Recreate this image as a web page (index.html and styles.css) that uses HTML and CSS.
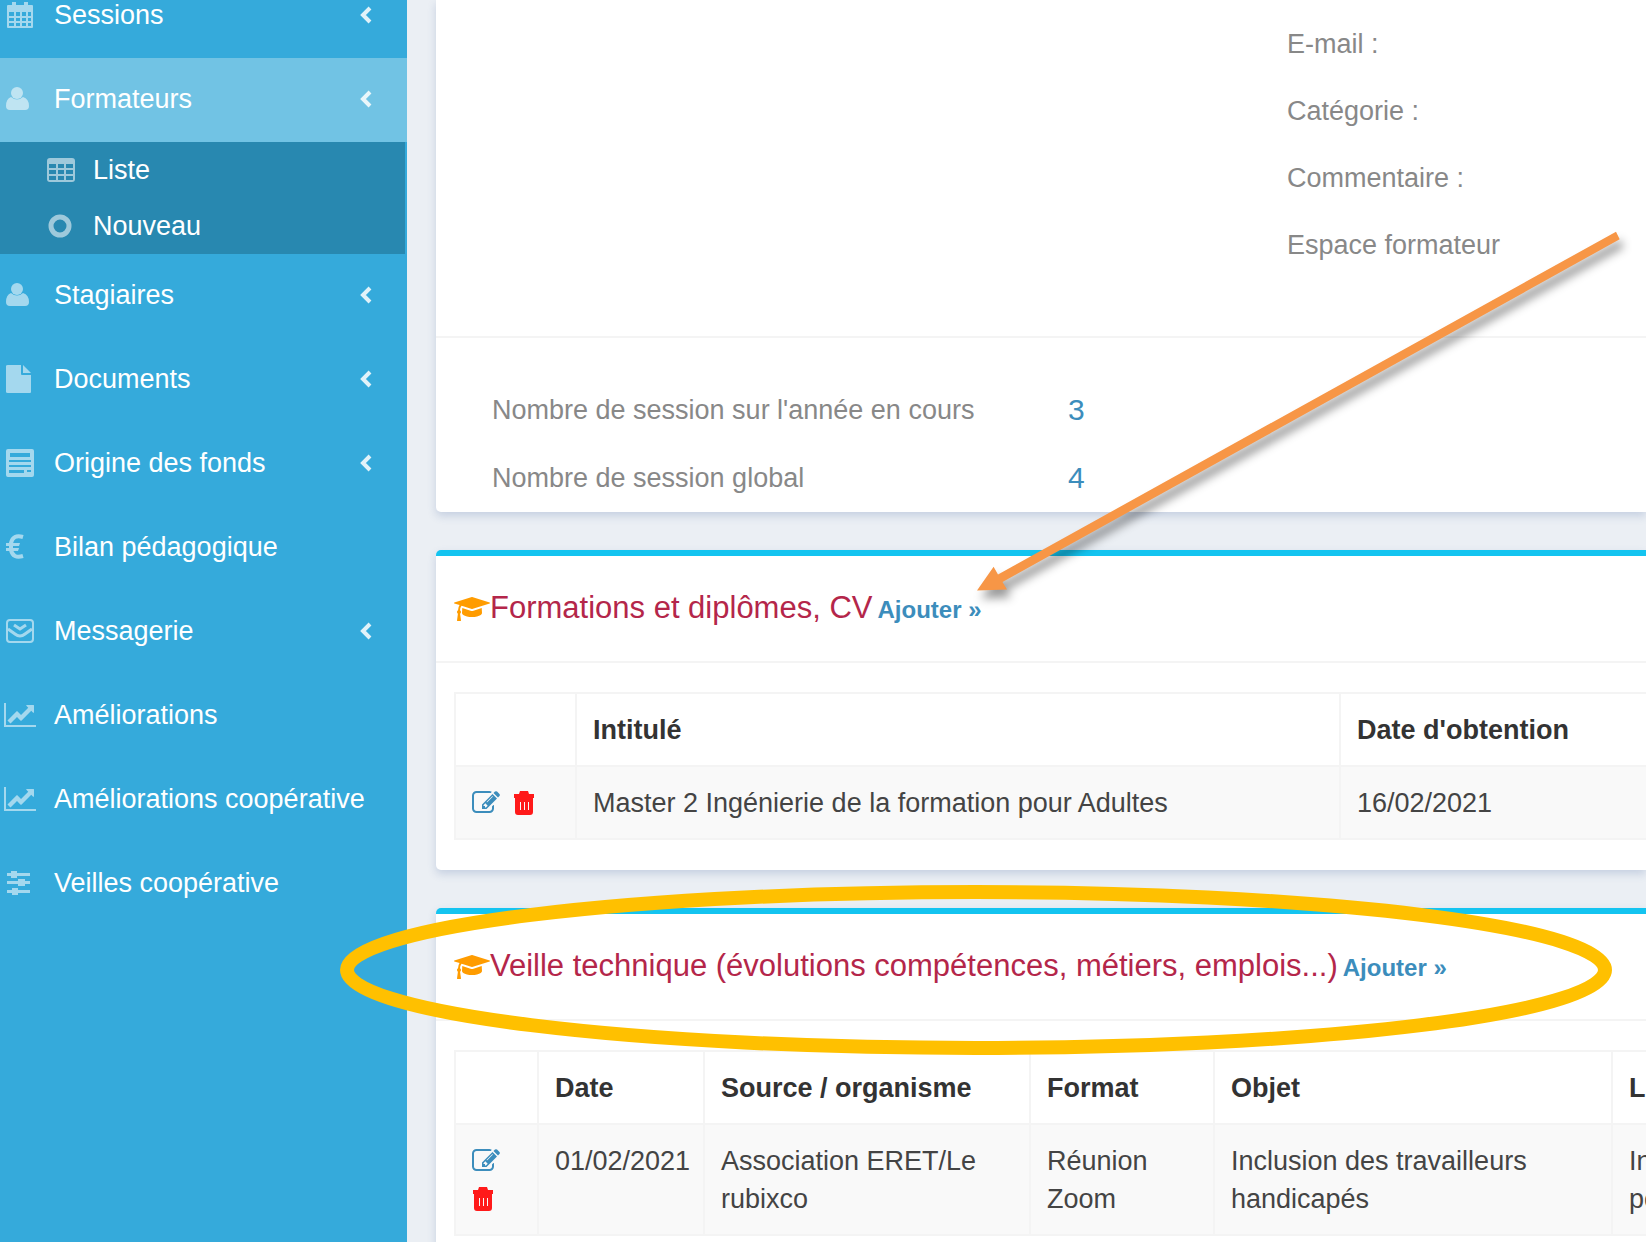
FILE: index.html
```html
<!DOCTYPE html>
<html lang="fr">
<head>
<meta charset="utf-8">
<title>Formateurs</title>
<link rel="stylesheet" href="styles.css">
</head>
<body>
<svg class="sprite" aria-hidden="true">
  <symbol id="i-calendar" viewBox="0 0 28 28"><path fill-rule="evenodd" d="M2 4h4V1h4v3h8V1h4v3h4q1 0 1 1v21q0 1-1 1H2q-1 0-1-1V5q0-1 1-1zM3 11v4h5v-4zm7 0v4h4v-4zm6 0v4h4v-4zm6 0v4h3v-4zM3 17v3h5v-3zm7 0v3h4v-3zm6 0v3h4v-3zm6 0v3h3v-3zM3 22v3h5v-3zm7 0v3h4v-3zm6 0v3h4v-3zm6 0v3h3v-3z"/></symbol>
  <symbol id="i-user" viewBox="0 0 28 28"><circle cx="11" cy="8" r="6"/><path d="M5 12q6 5 12 0 6 2 6 9 0 4-4 4H4q-4 0-4-4 0-7 5-9z"/></symbol>
  <symbol id="i-table" viewBox="0 0 28 28"><path fill-rule="evenodd" d="M3 2h22q3 0 3 3v18q0 3-3 3H3q-3 0-3-3V5q0-3 3-3zM2 8v4h7V8zm9 0v4h6V8zm8 0v4h7V8zM2 14v4h7v-4zm9 0v4h6v-4zm8 0v4h7v-4zM2 20v4h7v-4zm9 0v4h6v-4zm8 0v4h7v-4z"/></symbol>
  <symbol id="i-circle" viewBox="0 0 28 28"><circle cx="13" cy="14" r="9" fill="none" stroke="currentColor" stroke-width="5"/></symbol>
  <symbol id="i-file" viewBox="0 0 28 28"><path d="M2 0h13v9q0 1 1 1h9v17q0 1-1 1H2q-2 0-2-1V1q0-1 2-1z"/><path d="M17 0l8 8h-8z"/></symbol>
  <symbol id="i-form" viewBox="0 0 28 28"><path fill-rule="evenodd" d="M2 0h24q2 0 2 2v24q0 2-2 2H2q-2 0-2-2V2q0-2 2-2zM4 4v4h20V4zM3 11v2h22v-2zm0 5v2h22v-2zm0 5v3h15v-3zm18 0v2h4v-2z"/></symbol>
  <symbol id="i-euro" viewBox="0 0 28 28"><path fill="none" stroke="currentColor" stroke-width="4" d="M17 4Q7 1 5 10v7q2 9 12 6"/><path d="M0 10h14l-1 3H0zm0 5h13l-1 3H0z"/></symbol>
  <symbol id="i-inbox" viewBox="0 0 28 28"><rect x="1" y="3" width="26" height="22" rx="3" fill="none" stroke="currentColor" stroke-width="2"/><path fill="none" stroke="currentColor" stroke-width="3" d="M2 12l7 5q5 4 10 0l7-5M8 8l6 4 6-4"/></symbol>
  <symbol id="i-chart" viewBox="0 0 2048 1792"><path d="M2048 1536v128h-2048v-1536h128v1408h1920zm-128-1248v435q0 21-19.500 29.500t-35.500-7.500l-121-121-633 633q-10 10-23 10t-23-10l-233-233-416 416-192-192 585-585q10-10 23-10t23 10l233 233 464-464-121-121q-16-16-7.500-35.500t29.500-19.500h435q14 0 23 9t9 23z"/></symbol>
  <symbol id="i-sliders" viewBox="0 0 28 28"><path d="M1 4h4V2h6v2h13v3H11v2H5V7H1zm0 8h11v-2h7v2h5v3h-5v2h-7v-2H1zm0 9h5v-2h6v2h12v3H12v2H6v-2H1z"/></symbol>
  <symbol id="i-left" viewBox="0 0 14 20"><path fill="none" stroke="currentColor" stroke-width="4" d="M12 3L5 10l7 7"/></symbol>
  <symbol id="i-cap" viewBox="0 0 2304 1792"><path d="M1774 836l18 316q4 69-82 128t-235 93.500-323 34.500-323-34.500-235-93.500-82-128l18-316 574 181q22 7 48 7t48-7zm530-324q0 23-22 31l-1120 352q-4 1-10 1t-10-1l-652-206q-43 34-71 111.500t-34 178.500q63 36 63 109 0 69-58 107l58 433q2 14-8 25-9 11-24 11h-192q-15 0-24-11-10-11-8-25l58-433q-58-38-58-107 0-73 65-111 11-207 98-330l-333-104q-22-8-22-31t22-31l1120-352q4-1 10-1t10 1l1120 352q22 8 22 31z"/></symbol>
  <symbol id="i-edit" viewBox="0 0 1792 1792"><path d="M888 1184l116-116-152-152-116 116v56h96v96h56zm440-720q-16-16-33 1l-350 350q-17 17-1 33t33-1l350-350q17-17 1-33zm80 594v190q0 119-84.500 203.500t-203.500 84.500h-832q-119 0-203.500-84.500t-84.500-203.500v-832q0-119 84.500-203.500t203.500-84.500h832q63 0 117 25 15 7 18 23 3 17-9 29l-49 49q-14 14-32 8-23-6-45-6h-832q-66 0-113 47t-47 113v832q0 66 47 113t113 47h832q66 0 113-47t47-113v-126q0-13 9-22l64-64q15-15 35-7t20 29zm-96-738l288 288-672 672h-288v-288zm444 132l-92 92-288-288 92-92q28-28 68-28t68 28l152 152q28 28 28 68t-28 68z"/></symbol>
  <symbol id="i-trash" viewBox="0 0 22 26"><path fill-rule="evenodd" d="M7 1h8l1 3h5v4h-1v14q0 3-3 3H5q-3 0-3-3V8H1V4h5zM7 12v8h1v-8zm4 0v8h1v-8zm4 0v8h1v-8z"/></symbol>
</svg>

<div class="layout">
  <nav class="sidebar">
    <ul class="menu">
      <li><a class="item" href="#"><svg class="icon"><use href="#i-calendar"/></svg><span>Sessions</span><svg class="arrow"><use href="#i-left"/></svg></a></li>
      <li>
        <a class="item active" href="#"><svg class="icon"><use href="#i-user"/></svg><span>Formateurs</span><svg class="arrow"><use href="#i-left"/></svg></a>
        <ul class="submenu">
          <li><a class="subitem" href="#"><svg class="icon"><use href="#i-table"/></svg><span>Liste</span></a></li>
          <li><a class="subitem" href="#"><svg class="icon"><use href="#i-circle"/></svg><span>Nouveau</span></a></li>
        </ul>
      </li>
      <li><a class="item" href="#"><svg class="icon"><use href="#i-user"/></svg><span>Stagiaires</span><svg class="arrow"><use href="#i-left"/></svg></a></li>
      <li><a class="item" href="#"><svg class="icon"><use href="#i-file"/></svg><span>Documents</span><svg class="arrow"><use href="#i-left"/></svg></a></li>
      <li><a class="item" href="#"><svg class="icon"><use href="#i-form"/></svg><span>Origine des fonds</span><svg class="arrow"><use href="#i-left"/></svg></a></li>
      <li><a class="item" href="#"><svg class="icon"><use href="#i-euro"/></svg><span>Bilan pédagogique</span></a></li>
      <li><a class="item" href="#"><svg class="icon"><use href="#i-inbox"/></svg><span>Messagerie</span><svg class="arrow"><use href="#i-left"/></svg></a></li>
      <li><a class="item" href="#"><svg class="icon"><use href="#i-chart"/></svg><span>Améliorations</span></a></li>
      <li><a class="item" href="#"><svg class="icon"><use href="#i-chart"/></svg><span>Améliorations coopérative</span></a></li>
      <li><a class="item" href="#"><svg class="icon"><use href="#i-sliders"/></svg><span>Veilles coopérative</span></a></li>
    </ul>
  </nav>

  <main class="content">
    <section class="card profile">
      <ul class="fields">
        <li>E-mail :</li>
        <li>Catégorie :</li>
        <li>Commentaire :</li>
        <li>Espace formateur</li>
      </ul>
      <dl class="stats">
        <dt>Nombre de session sur l'année en cours</dt><dd>3</dd>
        <dt>Nombre de session global</dt><dd>4</dd>
      </dl>
    </section>

    <section class="card box">
      <h3 class="box-title"><svg class="cap"><use href="#i-cap"/></svg><span>Formations et diplômes, CV</span><a href="#">Ajouter »</a></h3>
      <div class="box-body">
        <table>
          <colgroup><col class="c-tools"><col class="c-title"><col></colgroup>
          <thead><tr><th></th><th>Intitulé</th><th>Date d'obtention</th></tr></thead>
          <tbody><tr>
            <td><div class="tools"><a class="edit" href="#" aria-label="Modifier"><svg><use href="#i-edit"/></svg></a><a class="trash" href="#" aria-label="Supprimer"><svg><use href="#i-trash"/></svg></a></div></td>
            <td>Master 2 Ingénierie de la formation pour Adultes</td><td>16/02/2021</td>
          </tr></tbody>
        </table>
      </div>
    </section>

    <section class="card box">
      <h3 class="box-title"><svg class="cap"><use href="#i-cap"/></svg><span>Veille technique (évolutions compétences, métiers, emplois...)</span><a href="#">Ajouter »</a></h3>
      <div class="box-body">
        <table>
          <colgroup><col class="c-icons"><col class="c-date"><col class="c-source"><col class="c-format"><col class="c-object"><col></colgroup>
          <thead><tr><th></th><th>Date</th><th>Source / organisme</th><th>Format</th><th>Objet</th><th>L</th></tr></thead>
          <tbody><tr>
            <td><div class="tools"><a class="edit" href="#" aria-label="Modifier"><svg><use href="#i-edit"/></svg></a><a class="trash" href="#" aria-label="Supprimer"><svg><use href="#i-trash"/></svg></a></div></td>
            <td>01/02/2021</td><td>Association ERET/Le rubixco</td><td>Réunion Zoom</td><td>Inclusion des travailleurs handicapés</td><td>In<br>po</td>
          </tr></tbody>
        </table>
      </div>
    </section>
  </main>

  <svg class="notes" aria-hidden="true">
    <ellipse cx="976" cy="970" rx="629" ry="78" fill="none" stroke="#ffc000" stroke-width="14"/>
    <path class="pointer" d="M977 590.600L993.600 566.700 998 574.500 1616 231.700 1619.700 239.300 1002.500 582 1007 589.500z"/>
  </svg>
</div>
</body>
</html>
```
FILE: styles.css
```css
* { box-sizing: border-box; }

body {
  margin: 0;
  background: #ebeff4;
  color: #444;
  font: 27px/38px "Liberation Sans", Arial, sans-serif;
}

a { color: #3c8dbc; text-decoration: none; }
ul, dl, dd, h3 { margin: 0; padding: 0; list-style: none; }
svg { display: block; fill: currentColor; }
.sprite { display: none; }

.layout {
  position: relative;
  display: flex;
  height: 100vh;
  overflow: hidden;
}

/* Sidebar */
.sidebar { flex: 0 0 407px; background: #35aadb; }
.menu { margin-top: -26px; }

.item, .subitem {
  display: flex;
  align-items: center;
  color: #fff;
  white-space: nowrap;
}
.item { height: 84px; padding: 0 35px 2px 4px; gap: 18px; }
.item.active { background: #71c3e4; }
.item .arrow { width: 14px; height: 20px; margin-left: auto; opacity: .85; }
.icon { flex: none; width: 32px; height: 28px; opacity: .55; }

.submenu { margin-right: 2px; background: #2888b0; }
.subitem { height: 56px; padding-left: 45px; gap: 16px; }

/* Content */
.content { flex: 1; min-width: 0; padding-left: 29px; }

.card {
  margin-bottom: 38px;
  background: #fff;
  border-radius: 5px 0 0 5px;
  box-shadow: 0 4px 8px rgba(70, 100, 160, .22);
}

.profile { border-top-left-radius: 0; color: #888; }
.fields { padding: 11px 0 57px 851px; border-bottom: 2px solid #f4f4f4; }
.fields li { line-height: 67px; }
.stats {
  display: grid;
  grid-template-columns: 576px 1fr;
  padding: 38px 0 0 56px;
  line-height: 68px;
}
.stats dt { height: 68px; }
.stats dd { color: #3c8dbc; font-size: 30px; }

.box { border-top: 6px solid #14c4f0; }
.box-title {
  display: flex;
  align-items: baseline;
  padding: 33px 18px 32px;
  border-bottom: 2px solid #f4f4f4;
  color: #b4264a;
  font-size: 31px;
  font-weight: 400;
}
.box-title .cap { align-self: center; width: 36px; height: 28px; color: #ff9c00; }
.box-title a { margin-left: 5px; font-size: 24px; font-weight: 700; }
.box-body { padding: 29px 0 30px 18px; }

table {
  width: 100%;
  table-layout: fixed;
  border-collapse: collapse;
}
th, td {
  padding: 17px 16px 16px;
  border: 2px solid #f4f4f4;
  border-right: 0;
  text-align: left;
  vertical-align: top;
}
th { color: #333; }
tbody tr { background: #f9f9f9; }

.c-tools { width: 121px; }
.c-title { width: 764px; }
.c-icons { width: 83px; }
.c-date { width: 166px; }
.c-source { width: 326px; }
.c-format { width: 184px; }
.c-object { width: 398px; }

.tools { display: flex; flex-wrap: wrap; column-gap: 13px; }
.tools a { display: flex; align-items: center; height: 38px; }
.edit svg { width: 28px; height: 28px; }
.trash svg { width: 22px; height: 26px; }
.tools .trash { color: #ff1a1a; }

/* Annotations drawn over the page */
.notes {
  position: absolute;
  inset: 0;
  width: 100%;
  height: 100%;
  pointer-events: none;
}
.pointer { fill: #f79646; filter: drop-shadow(4px 8px 5px rgba(0, 0, 0, .4)); }
```
